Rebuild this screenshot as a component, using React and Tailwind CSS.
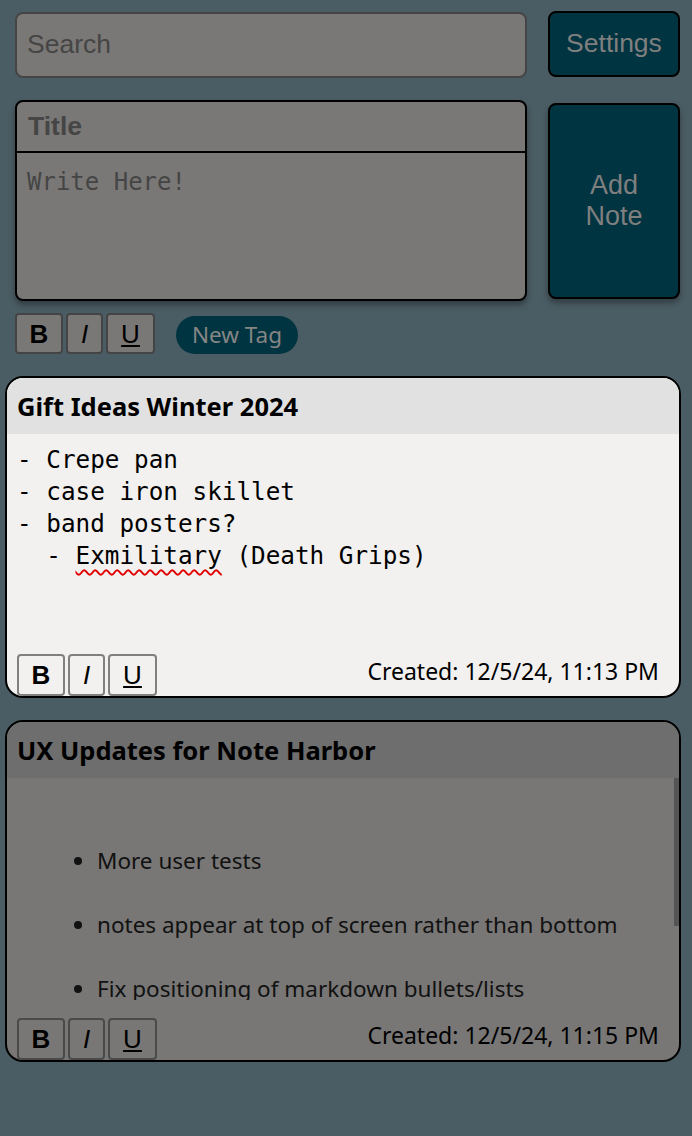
import React from "react";

const sans = { fontFamily: '"Liberation Sans", Arial, sans-serif' };

function FormatButtons({ variant }) {
  const base =
    variant === "top"
      ? "bg-[#7a7876] border-2 border-[#444444] text-black h-[41px]"
      : variant === "light"
      ? "bg-[#f2f1ef] border-2 border-[#808080] text-black h-[42px]"
      : "bg-[#787776] border-2 border-[#4a4a4a] text-black h-[42px]";
  return (
    <div className="flex gap-[3px]" style={sans}>
      <button className={`${base} w-[48px] rounded-[4px] text-[26px] font-bold leading-none flex items-center justify-center`}>B</button>
      <button className={`${base} w-[37px] rounded-[4px] text-[26px] italic leading-none flex items-center justify-center`}>I</button>
      <button className={`${base} w-[49px] rounded-[4px] text-[26px] underline leading-none flex items-center justify-center`}>U</button>
    </div>
  );
}

export default function App() {
  const ui = { fontFamily: '"Noto Sans", "Open Sans", sans-serif' };
  const mono = { fontFamily: '"DejaVu Sans Mono", "Liberation Mono", monospace' };
  return (
    <div className="w-[692px] min-h-[1136px] bg-[#4b5d64] pb-[76px]">
      {/* Top row */}
      <div className="flex items-start pt-[11px] pl-[15px]">
        <div
          className="mt-[1px] w-[512px] h-[66px] rounded-[8px] border-2 border-[#454545] bg-[#7a7876] flex items-center pl-[10px] text-[26.5px] text-[#454545]"
          style={sans}
        >
          Search
        </div>
        <button
          className="ml-[21px] w-[132px] h-[66px] rounded-[8px] border-2 border-black bg-[#003441] text-[26.5px] text-[#7f7f7f] flex items-center justify-center"
          style={sans}
        >
          Settings
        </button>
      </div>

      {/* Composer */}
      <div className="flex items-start pl-[15px] mt-[22px]">
        <div className="w-[512px] h-[201px] rounded-[8px] border-2 border-black bg-[#7a7876] flex flex-col overflow-hidden shadow-[0_4px_6px_rgba(0,0,0,0.35)]">
          <div
            className="h-[51px] border-b-2 border-black flex items-center pl-[11px] text-[26.5px] font-bold text-[#454545]"
            style={sans}
          >
            Title
          </div>
          <div className="flex-1 pl-[10px] pt-[17px] text-[24px] text-[#454545] leading-none" style={mono}>
            Write Here!
          </div>
        </div>
        <button
          className="ml-[21px] mt-[3px] w-[132px] h-[196px] rounded-[8px] border-2 border-black bg-[#003441] text-[27px] leading-[31px] text-[#7f7f7f] flex items-center justify-center text-center shadow-[0_4px_6px_rgba(0,0,0,0.35)]"
          style={sans}
        >
          Add
          <br />
          Note
        </button>
      </div>

      {/* Format + tag */}
      <div className="flex items-center pl-[15px] mt-[12px]">
        <FormatButtons variant="top" />
        <div
          className="ml-[21px] mt-[3px] w-[122px] h-[38px] rounded-full bg-[#003441] text-[#858585] text-[22.5px] flex items-center justify-center"
          style={ui}
        >
          New Tag
        </div>
      </div>

      {/* Card 1 */}
      <div className="mt-[22px] ml-[5px] w-[676px] h-[322px] rounded-[18px] border-2 border-black bg-[#f2f1ef] overflow-hidden flex flex-col">
        <div className="h-[56px] shrink-0 bg-[#e1e1e1] flex items-center pl-[10px] text-[25.5px] font-bold text-black" style={ui}>
          Gift Ideas Winter 2024
        </div>
        <div className="flex-1 pl-[10px] pt-[10px] text-[24.3px] leading-[32px] text-black whitespace-pre" style={mono}>
          {"- Crepe pan\n- case iron skillet\n- band posters?\n  - "}
          <span className="underline decoration-wavy decoration-[#e00000] decoration-[1.5px] underline-offset-[5px]">Exmilitary</span>
          {" (Death Grips)"}
        </div>
        <div className="shrink-0 flex items-end justify-between pl-[10px] pr-[20px]">
          <FormatButtons variant="light" />
          <div className="text-[23px] text-black pb-[8px]" style={ui}>
            Created: 12/5/24, 11:13 PM
          </div>
        </div>
      </div>

      {/* Card 2 */}
      <div className="relative mt-[22px] ml-[5px] w-[676px] h-[342px] rounded-[18px] border-2 border-black bg-[#787776] overflow-hidden flex flex-col">
        <div className="h-[56px] shrink-0 bg-[#6e6e6e] flex items-center pl-[10px] text-[25.5px] font-bold text-black" style={ui}>
          UX Updates for Note Harbor
        </div>
        <div className="relative flex-1 overflow-hidden">
          <ul className="list-disc pl-[90px] pt-[68px] text-[22.5px] text-[#111] leading-[30px]" style={ui}>
            <li className="mb-[34px]">More user tests</li>
            <li className="mb-[34px]">notes appear at top of screen rather than bottom</li>
            <li>Fix positioning of markdown bullets/lists</li>
          </ul>
          <div className="absolute right-0 top-0 w-[5px] h-[148px] bg-[#555555]" />
        </div>
        <div className="shrink-0 pt-[18px] flex items-end justify-between pl-[10px] pr-[20px]">
          <FormatButtons variant="dark" />
          <div className="text-[23px] text-black pb-[8px]" style={ui}>
            Created: 12/5/24, 11:15 PM
          </div>
        </div>
      </div>
    </div>
  );
}
